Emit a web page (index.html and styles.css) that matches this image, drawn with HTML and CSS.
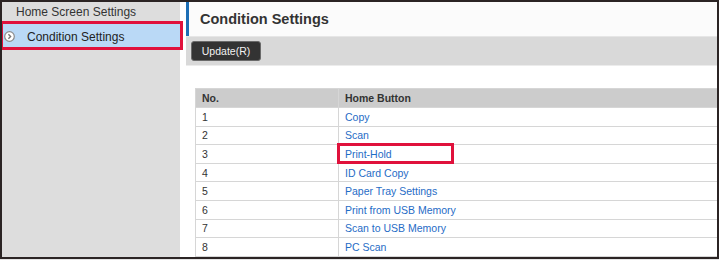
FILE: index.html
```html
<!DOCTYPE html>
<html lang="en">
<head>
    <meta charset="UTF-8">
    <title>Condition Settings</title>
    <link rel="stylesheet" href="styles.css">
</head>
<body>
    <div class="frame">
        <nav class="sidebar">
            <div class="nav-item">Home Screen Settings</div>
            <div class="nav-item nav-active">
                <svg class="nav-icon" width="11" height="11" viewBox="0 0 11 11">
                    <circle cx="5.5" cy="5.5" r="4.8" fill="#fff" stroke="#8a8a8a" stroke-width="1.2"/>
                    <path d="M4.4 3.2 L6.6 5.5 L4.4 7.8" fill="none" stroke="#777" stroke-width="1.4"/>
                </svg>
                Condition Settings
            </div>
            <div class="mark mark-nav"></div>
        </nav>

        <main class="content">
            <div class="page-header">Condition Settings</div>
            <div class="toolbar">
                <button class="update-button">Update(R)</button>
            </div>

            <div class="table-wrap">
                <table class="grid">
                    <thead>
                        <tr><th class="col-no">No.</th><th>Home Button</th></tr>
                    </thead>
                    <tbody>
                        <tr><td>1</td><td><a href="#">Copy</a></td></tr>
                        <tr><td>2</td><td><a href="#">Scan</a></td></tr>
                        <tr><td>3</td><td><a href="#">Print-Hold</a></td></tr>
                        <tr><td>4</td><td><a href="#">ID Card Copy</a></td></tr>
                        <tr><td>5</td><td><a href="#">Paper Tray Settings</a></td></tr>
                        <tr><td>6</td><td><a href="#">Print from USB Memory</a></td></tr>
                        <tr><td>7</td><td><a href="#">Scan to USB Memory</a></td></tr>
                        <tr><td>8</td><td><a href="#">PC Scan</a></td></tr>
                    </tbody>
                </table>
                <div class="mark mark-row"></div>
            </div>
        </main>
    </div>
</body>
</html>
```

FILE: styles.css
```css
* {
    margin: 0;
    padding: 0;
    box-sizing: border-box;
}

body {
    font-family: 'Liberation Sans', Arial, sans-serif;
    background: #e4e4e4;
    color: #333;
}

.frame {
    position: relative;
    width: 719px;
    height: 259px;
    border: 2px solid #2b2424;
    background: #fff;
    display: grid;
    grid-template-columns: 178px 1fr;
    column-gap: 6px;
    overflow: hidden;
}

/* left menu */
.sidebar {
    background: #dddddd;
}

.nav-item {
    height: 20px;
    padding-left: 14px;
    font-size: 12px;
    line-height: 20px;
    color: #333;
}

.nav-active {
    height: 25px;
    margin-top: 2px;
    padding-left: 2px;
    display: flex;
    align-items: center;
    gap: 12px;
    background: #bad9f6;
    color: #222;
}

.nav-icon {
    flex: none;
}

/* red annotation boxes */
.mark {
    position: absolute;
    border: 3px solid #e0113c;
    pointer-events: none;
}

.mark-nav {
    left: -2px;
    top: 19px;
    width: 183px;
    height: 29px;
}

.mark-row {
    left: 142px;
    top: 55px;
    width: 117px;
    height: 21px;
}

/* main area */
.content {
    display: flex;
    flex-direction: column;
    min-width: 0;
}

.page-header {
    height: 34px;
    border-left: 3px solid #1d6eb5;
    padding-left: 11px;
    background: #fbfbfb;
    font-size: 14.5px;
    font-weight: bold;
    line-height: 34px;
    color: #333;
}

.toolbar {
    height: 30px;
    padding: 4px 5px;
    background: #d9d9d9;
    border-top: 1px solid #e6e6e6;
    border-bottom: 1px solid #ececec;
}

.update-button {
    width: 70px;
    height: 20px;
    background: #333;
    border: 1px solid #6a6a6a;
    border-radius: 3px;
    color: #f2f2f2;
    font-family: 'Liberation Sans', Arial, sans-serif;
    font-size: 10.5px;
}

.table-wrap {
    position: relative;
    margin: 22px 0 0 9px;
}

.grid {
    width: 100%;
    border-collapse: collapse;
    font-size: 10.5px;
}

.grid th,
.grid td {
    height: 18.6px;
    padding: 0 6px;
    text-align: left;
    border: 1px solid #d6d6d6;
    border-right: none;
}

.grid th {
    height: 19px;
    background: #cccccc;
    color: #333;
    font-weight: bold;
}

.grid .col-no {
    width: 143px;
}

.grid a {
    color: #1f6cc6;
    text-decoration: none;
}
```
